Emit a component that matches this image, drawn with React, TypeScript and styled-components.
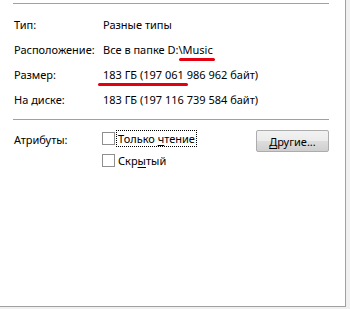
import React from 'react';
import styled, { createGlobalStyle } from 'styled-components';

const GlobalStyle = createGlobalStyle`
  html, body {
    margin: 0;
    padding: 0;
    background: #f0f0f0;
  }
  body {
    font-family: "Segoe UI", "Noto Sans", "Liberation Sans", sans-serif;
    font-size: 11px;
    color: #000;
  }
`;

const Panel = styled.div`
  box-sizing: border-box;
  width: 346px;
  height: 307px;
  background: #fff;
  border-right: 1px solid #a0a0a0;
  border-bottom: 1px solid #a0a0a0;
  padding: 3px 16px 0 13px;
`;

const Separator = styled.div<{ $gap: number }>`
  height: 1px;
  background: #a0a0a0;
  margin-bottom: ${(p) => p.$gap}px;
`;

const InfoGrid = styled.div`
  display: grid;
  grid-template-columns: 90px 1fr;
  grid-auto-rows: 25px;
  align-items: center;
  margin-bottom: 7px;
`;

const Label = styled.div`
  padding-left: 1px;
  white-space: nowrap;
`;

const Value = styled.div`
  position: relative;
  white-space: nowrap;
`;

// red marker stroke drawn over the text
const Marked = styled.span<{ $left: number; $width?: number }>`
  position: relative;
  &::after {
    content: '';
    position: absolute;
    left: ${(p) => p.$left}px;
    ${(p) => (p.$width ? `width: ${p.$width}px;` : 'right: -2px;')}
    bottom: -4px;
    height: 3px;
    border-radius: 2px;
    background: #e3000f;
  }
`;

const AttrRow = styled.div`
  display: grid;
  grid-template-columns: 89px 1fr auto;
  align-items: start;
  padding-top: 10px;
`;

const AttrLabel = styled.div`
  padding: 2px 0 0 1px;
`;

const Checks = styled.div`
  display: flex;
  flex-direction: column;
  gap: 5px;
`;

const CheckRow = styled.label`
  display: flex;
  align-items: center;
  gap: 2px;
  height: 17px;
`;

const Box = styled.span`
  box-sizing: border-box;
  width: 13px;
  height: 13px;
  border: 1px solid #8f8f8f;
  background: #fff;
`;

const CheckText = styled.span<{ $focused?: boolean }>`
  padding: 0 1px;
  line-height: 15px;
  outline: ${(p) => (p.$focused ? '1px dotted #000' : 'none')};
`;

const Key = styled.u`
  text-decoration-thickness: 1px;
  text-underline-offset: 2px;
`;

const Button = styled.button`
  box-sizing: border-box;
  width: 73px;
  height: 22px;
  font: inherit;
  color: #000;
  border: 1px solid #acacac;
  border-radius: 2px;
  background: linear-gradient(#f2f2f2, #ebebeb 50%, #dddddd 51%, #cfcfcf);
  padding: 0;
`;

export default function App() {
  return (
    <>
      <GlobalStyle />
      <Panel>
        <Separator $gap={8} />
        <InfoGrid>
          <Label>Тип:</Label>
          <Value>Разные типы</Value>
          <Label>Расположение:</Label>
          <Value>
            Все в папке D:<Marked $left={1}>\Music</Marked>
          </Value>
          <Label>Размер:</Label>
          <Value>
            <Marked $left={-5} $width={90}>183 ГБ</Marked> (197 061 986 962 байт)
          </Value>
          <Label>На диске:</Label>
          <Value>183 ГБ (197 116 739 584 байт)</Value>
        </InfoGrid>
        <Separator $gap={0} />
        <AttrRow>
          <AttrLabel>Атрибуты:</AttrLabel>
          <Checks>
            <CheckRow>
              <Box />
              <CheckText $focused>
                Только <Key>ч</Key>тение
              </CheckText>
            </CheckRow>
            <CheckRow>
              <Box />
              <CheckText>
                Скр<Key>ы</Key>тый
              </CheckText>
            </CheckRow>
          </Checks>
          <Button>
            <Key>Д</Key>ругие...
          </Button>
        </AttrRow>
      </Panel>
    </>
  );
}
